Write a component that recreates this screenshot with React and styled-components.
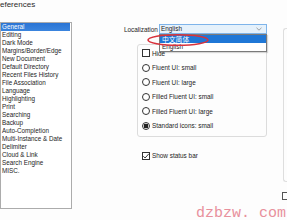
import styled, { createGlobalStyle } from 'styled-components';

const GlobalStyle = createGlobalStyle`
    html, body {
        margin: 0;
        padding: 0;
        background: #fdfdfd;
    }
    body {
        font-family: "Liberation Sans", Arial, sans-serif;
        color: #1c1c1c;
    }
`

const pages = [
    'General', 'Editing', 'Dark Mode', 'Margins/Border/Edge', 'New Document',
    'Default Directory', 'Recent Files History', 'File Association', 'Language',
    'Highlighting', 'Print', 'Searching', 'Backup', 'Auto-Completion',
    'Multi-Instance & Date', 'Delimiter', 'Cloud & Link', 'Search Engine', 'MISC.',
]

const iconModes = [
    { id: 'fs', text: 'Fluent UI: small' },
    { id: 'fl', text: 'Fluent UI: large' },
    { id: 'ffs', text: 'Filled Fluent UI: small' },
    { id: 'ffl', text: 'Filled Fluent UI: large' },
    { id: 'std', text: 'Standard icons: small', checked: true },
]

const Check = ({ checked }) => (
    <Box>
        {checked && (
            <svg width="8" height="8" viewBox="0 0 8 8">
                <path d="M1.3 4.2 L3.1 6 L6.8 1.8" fill="none" stroke="#222" strokeWidth="0.9" />
            </svg>
        )}
    </Box>
)

const App = () => {
    return (
        <Page>
            <GlobalStyle />
            <Title>Preferences</Title>
            <Body>
                <ListBox>
                    {pages.map((p, i) => (
                        <Item key={p} $selected={i === 0}>{p}</Item>
                    ))}
                </ListBox>
                <Settings>
                    <LocaleRow>
                        <Label>Localization</Label>
                        <Combo>
                            <span>English</span>
                            <svg width="6" height="4" viewBox="0 0 6 4">
                                <path d="M0.5 0.8 L3 3.2 L5.5 0.8" fill="none" stroke="#8a8a8a" strokeWidth="0.8" />
                            </svg>
                            <Popup>
                                <PopupItem $active>中文简体</PopupItem>
                                <PopupItem>English</PopupItem>
                            </Popup>
                            <Mark width="64" height="14" viewBox="0 0 64 14">
                                <ellipse cx="32" cy="7" rx="30" ry="5.2" fill="none" stroke="#d8323c" strokeWidth="1.6" />
                            </Mark>
                        </Combo>
                    </LocaleRow>
                    <Group>
                        <Row>
                            <Check />
                            <span>Hide</span>
                        </Row>
                        {iconModes.map(m => (
                            <Row key={m.id}>
                                <Radio $checked={m.checked} />
                                <span>{m.text}</span>
                            </Row>
                        ))}
                    </Group>
                    <StatusRow>
                        <Check checked />
                        <span>Show status bar</span>
                    </StatusRow>
                </Settings>
                <SidePanel>
                    <Frame />
                    <Box />
                </SidePanel>
            </Body>
            <Watermark>dzbzw. com</Watermark>
        </Page>
    )
}

const Page = styled.div`
    position: relative;
    width: 287px;
    height: 220px;
    overflow: hidden;
`

const Title = styled.div`
    height: 22px;
    margin-left: -8px;
    font-size: 8px;
    line-height: 10px;
    color: #2a2a2a;
`

const Body = styled.div`
    display: flex;
    align-items: flex-start;
`

const ListBox = styled.div`
    flex: none;
    box-sizing: border-box;
    width: 72px;
    height: 187px;
    border: 1px solid #acacac;
    background: #fff;
    padding-top: 0px;
`

const Item = styled.div`
    height: 8px;
    line-height: 8px;
    font-size: 6.3px;
    padding-left: 1px;
    margin-right: 1px;
    white-space: nowrap;
    color: ${p => p.$selected ? '#fff' : '#1c1c1c'};
    background: ${p => p.$selected ? 'linear-gradient(#2a74d4, #3b85de)' : 'transparent'};
`

const Settings = styled.div`
    flex: none;
    width: 143px;
    margin-left: 52px;
    display: flex;
    flex-direction: column;
    font-size: 6.4px;
`

const LocaleRow = styled.div`
    display: flex;
    align-items: center;
    margin-top: 2px;
    height: 10px;
    position: relative;
    z-index: 2;
`

const Label = styled.span`
    width: 35px;
    flex: none;
`

const Combo = styled.div`
    position: relative;
    box-sizing: border-box;
    width: 108px;
    height: 10px;
    border: 1px solid #7eb4ea;
    background: #e5f1fb;
    display: flex;
    align-items: center;
    justify-content: space-between;
    padding: 0 4px 0 1px;
    span {
        line-height: 8px;
    }
`

const Popup = styled.div`
    position: absolute;
    left: -1px;
    top: 9px;
    box-sizing: border-box;
    width: 108px;
    border: 1px solid #7a7a7a;
    background: #fff;
    box-shadow: 1px 1px 1px rgba(0, 0, 0, 0.15);
`

const PopupItem = styled.div`
    height: 8px;
    line-height: 8px;
    padding-left: 2px;
    font-family: ${p => p.$active ? '"Noto Sans CJK SC", sans-serif' : 'inherit'};
    font-size: ${p => p.$active ? '6.8px' : '6.4px'};
    color: ${p => p.$active ? '#fff' : '#1c1c1c'};
    background: ${p => p.$active ? '#1f77d6' : 'transparent'};
`

const Mark = styled.svg`
    position: absolute;
    left: -14px;
    top: 8px;
`

const Group = styled.div`
    box-sizing: border-box;
    width: 130px;
    margin: 10px 0 0 13px;
    padding: 1px 0 3px 4px;
    border: 1px solid #dcdcdc;
    border-radius: 3px;
    display: flex;
    flex-direction: column;
`

const Row = styled.div`
    display: flex;
    align-items: center;
    gap: 2px;
    height: 14.5px;
    white-space: nowrap;
`

const StatusRow = styled(Row)`
    margin: 11.5px 0 0 18px;
`

const Box = styled.div`
    flex: none;
    box-sizing: border-box;
    width: 8px;
    height: 8px;
    border: 1px solid #333;
    background: #fff;
    display: grid;
    place-items: center;
    svg {
        margin: -1px;
    }
`

const Radio = styled.div`
    flex: none;
    box-sizing: border-box;
    width: 8px;
    height: 8px;
    border-radius: 50%;
    border: 1px solid #333;
    background: ${p => p.$checked ? 'radial-gradient(circle, #222 0 2.2px, #fff 2.6px)' : '#fff'};
`

const SidePanel = styled.div`
    flex: none;
    margin-left: 16px;
    margin-top: 6px;
    display: flex;
    flex-direction: column;
    gap: 10px;
    ${Box} {
        margin-left: -1px;
        border-color: #555;
    }
`

const Frame = styled.div`
    width: 20px;
    height: 152px;
    border: 1px solid #dedede;
    border-right: none;
    border-radius: 3px 0 0 3px;
`

const Watermark = styled.div`
    position: absolute;
    left: 196px;
    top: 206px;
    font-family: "Liberation Mono", "Courier New", monospace;
    font-size: 15px;
    line-height: 15px;
    color: #e8909c;
    white-space: pre;
`

export default App
